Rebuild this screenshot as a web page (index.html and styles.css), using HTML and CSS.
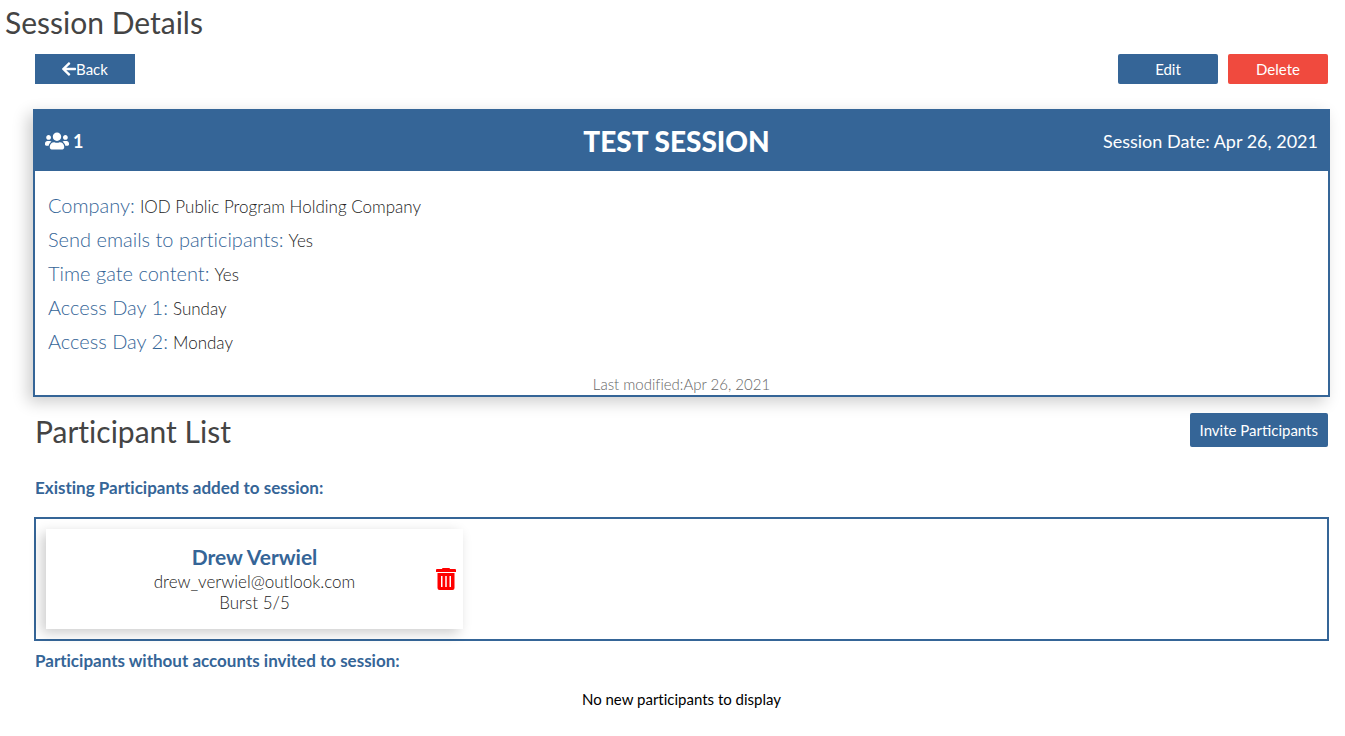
FILE: index.html
```html
<!DOCTYPE html>
<html lang="en">
<head>
<meta charset="utf-8">
<title>Session Details</title>
<link rel="stylesheet" href="styles.css">
</head>
<body>
<h1 class="page-title">Session Details</h1>
<main class="content">
  <div class="toolbar">
    <button class="btn btn-back" type="button">
      <svg class="icon-arrow" viewBox="0 0 448 512" aria-hidden="true"><path d="M257.5 445.100l-22.200 22.200c-9.400 9.400-24.600 9.400-33.900 0L7 273c-9.400-9.400-9.400-24.600 0-33.900L201.400 44.700c9.400-9.400 24.600-9.400 33.900 0l22.200 22.200c9.500 9.500 9.300 25-.4 34.300L136.600 216H424c13.300 0 24 10.700 24 24v32c0 13.300-10.700 24-24 24H136.600l120.500 114.800c9.800 9.300 10 24.800.4 34.300z"/></svg>Back
    </button>
    <div class="actions">
      <button class="btn" type="button">Edit</button>
      <button class="btn btn-delete" type="button">Delete</button>
    </div>
  </div>

  <section class="session">
    <header class="session-head">
      <span class="count">
        <svg class="icon-users" viewBox="0 0 640 512" aria-hidden="true"><path d="M96 224c35.300 0 64-28.700 64-64s-28.700-64-64-64-64 28.700-64 64 28.700 64 64 64zm448 0c35.300 0 64-28.700 64-64s-28.700-64-64-64-64 28.700-64 64 28.700 64 64 64zm32 32h-64c-17.600 0-33.500 7.100-45.100 18.600 40.300 22.100 68.900 62 75.100 109.400h66c17.700 0 32-14.300 32-32v-32c0-35.300-28.700-64-64-64zm-256 0c61.900 0 112-50.100 112-112S381.900 32 320 32 208 82.100 208 144s50.100 112 112 112zm76.800 32h-8.300c-20.800 10-43.900 16-68.500 16s-47.600-6-68.500-16h-8.300C179.600 288 128 339.600 128 403.200V432c0 26.500 21.500 48 48 48h288c26.500 0 48-21.500 48-48v-28.800c0-63.600-51.600-115.200-115.200-115.200zm-223.700-13.400C161.500 263.100 145.600 256 128 256H64c-35.300 0-64 28.700-64 64v32c0 17.700 14.300 32 32 32h65.900c6.300-47.400 34.900-87.300 75.200-109.400z"/></svg>1
      </span>
      <h2 class="session-name">TEST SESSION</h2>
      <span class="session-date">Session Date: Apr 26, 2021</span>
    </header>
    <dl class="details">
      <div class="detail"><dt>Company:</dt><dd>IOD Public Program Holding Company</dd></div>
      <div class="detail"><dt>Send emails to participants:</dt><dd>Yes</dd></div>
      <div class="detail"><dt>Time gate content:</dt><dd>Yes</dd></div>
      <div class="detail"><dt>Access Day 1:</dt><dd>Sunday</dd></div>
      <div class="detail"><dt>Access Day 2:</dt><dd>Monday</dd></div>
    </dl>
    <p class="modified">Last modified:Apr 26, 2021</p>
  </section>

  <div class="list-head">
    <h2 class="list-title">Participant List</h2>
    <button class="btn btn-invite" type="button">Invite Participants</button>
  </div>
  <h3 class="subhead">Existing Participants added to session:</h3>
  <div class="participants">
    <article class="participant">
      <div class="person">
        <h4 class="person-name">Drew Verwiel</h4>
        <p>drew_verwiel@outlook.com</p>
        <p>Burst 5/5</p>
      </div>
      <button class="remove" type="button" aria-label="Remove participant">
        <svg class="icon-trash" viewBox="0 0 20 22" aria-hidden="true"><path fill-rule="evenodd" d="M6 1Q6 0 7 0H13Q14 0 14 1H19Q20 1 20 2V4H0V2Q0 1 1 1ZM1.500 5H18.500V20Q18.500 22 16.500 22H3.500Q1.500 22 1.500 20ZM5 8V19H6.500V8ZM9.250 8V19H10.750V8ZM13.500 8V19H15V8Z"/></svg>
      </button>
    </article>
  </div>
  <h3 class="subhead">Participants without accounts invited to session:</h3>
  <p class="empty">No new participants to display</p>
</main>
</body>
</html>
```
FILE: styles.css
```css
* { box-sizing: border-box; }

body {
  margin: 0;
  background: #fff;
  color: #222;
  font-family: Lato, "Open Sans", sans-serif;
  font-size: 17px;
  font-weight: 300;
  font-variant-ligatures: none;
}

h1, h2, h3, h4, p, dl, dd { margin: 0; }

.page-title, .list-title {
  color: #444;
  font-size: 30px;
  font-weight: 400;
  line-height: 44px;
}

.page-title { padding-left: 5px; }

.content { padding: 10px 17px 0 35px; }

.toolbar, .actions, .list-head { display: flex; }
.toolbar, .list-head { justify-content: space-between; }
.actions { gap: 10px; }

.btn {
  display: flex;
  align-items: center;
  justify-content: center;
  min-width: 100px;
  height: 30px;
  padding: 0 10px;
  border: 0;
  border-radius: 2px;
  background: #356597;
  color: #fff;
  font-family: inherit;
  font-size: 15px;
  font-weight: 400;
}

.btn-back { border-radius: 0; }
.btn-delete { background: #f04a3e; }
.btn-invite { height: 34px; }

.icon-arrow { width: 14px; height: 16px; fill: #fff; }

.session {
  margin: 25px -2px 0;
  border: 2px solid #356597;
  background: #fff;
  box-shadow: -5px 5px 15px rgba(0, 0, 0, 0.2);
}

.session-head {
  display: grid;
  grid-template-columns: 1fr auto 1fr;
  align-items: center;
  height: 60px;
  padding: 0 10px;
  background: #356597;
  color: #fff;
  font-size: 18px;
  font-weight: 400;
}

.count {
  display: flex;
  align-items: center;
  gap: 4px;
  font-weight: 700;
}

.icon-users { width: 24px; height: 20px; fill: #fff; }
.session-name { padding-right: 10px; font-size: 28px; font-weight: 900; }
.session-date { text-align: right; }

.details { padding: 17px 13px 0; }
.detail { display: flex; align-items: baseline; gap: 5px; height: 34px; line-height: 34px; }
.detail dt { color: #356597; font-size: 20px; }

.modified {
  padding: 16px 0 1px;
  color: #666;
  font-size: 15px;
  line-height: 20px;
  text-align: center;
}

.list-head { padding-top: 16px; }
.list-title { line-height: 36px; }

.subhead {
  color: #356597;
  font-size: 17px;
  font-weight: 700;
  line-height: 20px;
}

.list-head + .subhead { margin: 29px 0 19px; }

.participants {
  margin: 0 -1px 10px;
  padding: 10px;
  border: 2px solid #356597;
}

.participant {
  display: flex;
  align-items: center;
  width: 33%;
  max-width: 417px;
  height: 100px;
  padding-right: 7px;
  background: #fff;
  box-shadow: -4px 4px 12px rgba(0, 0, 0, 0.2);
}

.person { flex: 1; padding: 0 0 2px 27px; line-height: 21px; text-align: center; }
.person-name { color: #356597; font-size: 21px; font-weight: 700; line-height: 28px; }

.remove { padding: 0; border: 0; background: none; }
.icon-trash { display: block; width: 20px; height: 22px; fill: #f00; }

.empty {
  margin-top: 17px;
  color: #000;
  font-size: 15px;
  font-weight: 400;
  line-height: 22px;
  text-align: center;
}
```
